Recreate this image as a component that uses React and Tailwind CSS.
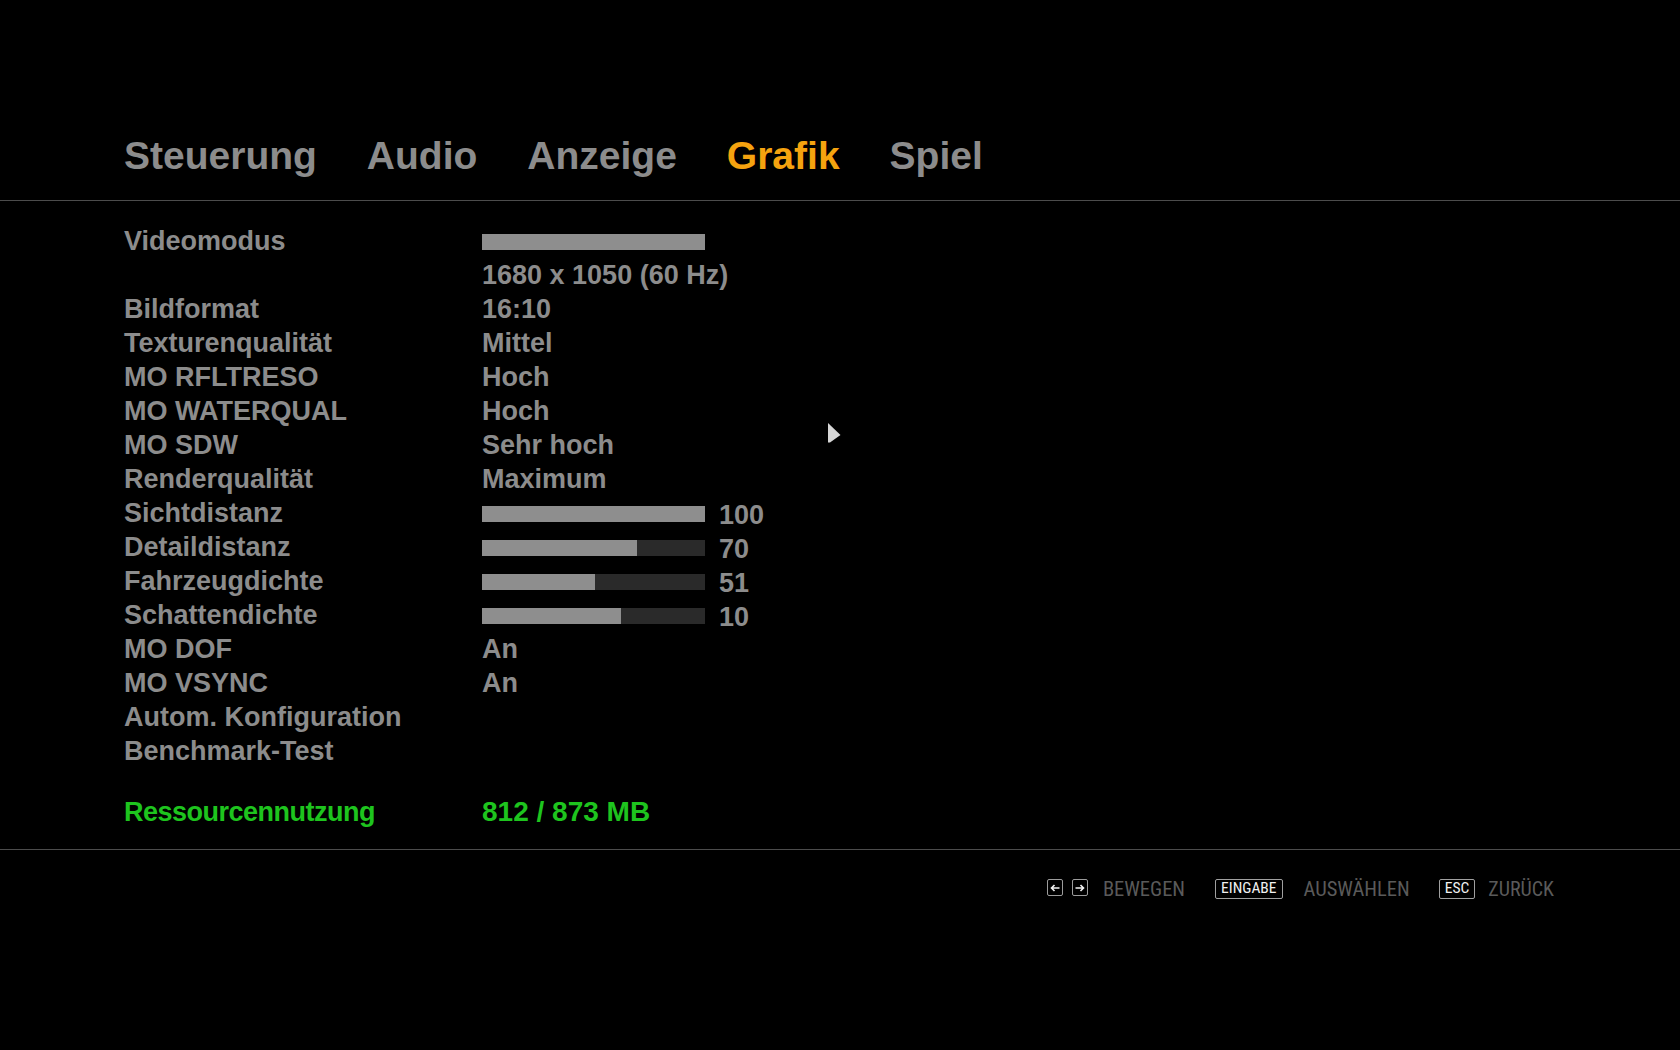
import React from 'react';

const tabs = [
  { name: 'Steuerung' },
  { name: 'Audio' },
  { name: 'Anzeige' },
  { name: 'Grafik', active: true },
  { name: 'Spiel' },
];

const rows = [
  { label: 'Videomodus', bar: 100 },
  { label: '', value: '1680 x 1050 (60 Hz)' },
  { label: 'Bildformat', value: '16:10' },
  { label: 'Texturenqualität', value: 'Mittel' },
  { label: 'MO RFLTRESO', value: 'Hoch' },
  { label: 'MO WATERQUAL', value: 'Hoch' },
  { label: 'MO SDW', value: 'Sehr hoch' },
  { label: 'Renderqualität', value: 'Maximum' },
  { label: 'Sichtdistanz', bar: 100, num: '100' },
  { label: 'Detaildistanz', bar: 69.4, num: '70' },
  { label: 'Fahrzeugdichte', bar: 50.7, num: '51' },
  { label: 'Schattendichte', bar: 62.3, num: '10' },
  { label: 'MO DOF', value: 'An' },
  { label: 'MO VSYNC', value: 'An' },
  { label: 'Autom. Konfiguration' },
  { label: 'Benchmark-Test' },
];

function Bar({ fill }) {
  return (
    <div className="mt-[10px] h-4 w-[223px] bg-[#2a2a2a]">
      <div className="h-full bg-[#8e8e8e]" style={{ width: `${fill}%` }} />
    </div>
  );
}

function Row({ row }) {
  return (
    <div className="flex h-[34px] items-start text-[27px] leading-[34px]">
      <div className="w-[358px] shrink-0 whitespace-nowrap">{row.label}</div>
      {row.bar !== undefined && <Bar fill={row.bar} />}
      {row.num && <div className="ml-[14px] mt-[2px]">{row.num}</div>}
      {row.value && <div className="whitespace-nowrap">{row.value}</div>}
    </div>
  );
}

function ArrowKey({ dir }) {
  return (
    <div className="flex h-[17px] w-[16px] items-center justify-center rounded-[2px] border border-[#9c9c9c]">
      <svg width="10" height="8" viewBox="0 0 10 8" fill="none" stroke="#f2f2f2" strokeWidth="1.6">
        {dir === 'left' ? (
          <path d="M9.5 4H1.5M4.5 1L1.5 4l3 3" />
        ) : (
          <path d="M0.5 4H8.5M5.5 1l3 3-3 3" />
        )}
      </svg>
    </div>
  );
}

function KeyCap({ children }) {
  return (
    <div className="flex h-[20px] items-center rounded-[2px] border border-[#a0a0a0] px-[5px] text-[15.5px] leading-none text-[#f0f0f0]">
      {children}
    </div>
  );
}

export default function App() {
  return (
    <div className="relative h-[1050px] w-full overflow-hidden bg-black font-['Liberation_Sans',Arial,sans-serif] font-bold text-[#8c8c8c]">
      {/* tab strip */}
      <div className="flex gap-[50px] border-b border-[#4c4c4c] pb-[21px] pl-[124px] pt-[132px] text-[39px] leading-[47px]">
        {tabs.map((t) => (
          <div key={t.name} className={t.active ? 'text-[#f5a30f]' : 'text-[#8c8c8c]'}>
            {t.name}
          </div>
        ))}
      </div>

      {/* settings list */}
      <div className="border-b border-[#4c4c4c] pb-[20px] pl-[124px] pt-[23px]">
        {rows.map((r, i) => (
          <Row key={i} row={r} />
        ))}
        <div className="mt-[27px] flex h-[34px] items-baseline leading-[34px] text-[#1ec41e]">
          <div className="w-[358px] shrink-0 text-[27px] tracking-[-0.5px]">Ressourcennutzung</div>
          <div className="text-[28px]">812 / 873 MB</div>
        </div>
      </div>

      {/* key legend */}
      <div className="mt-[29px] flex items-start justify-end pr-[126px] font-['Roboto_Condensed',Roboto,sans-serif] font-normal">
        <ArrowKey dir="left" />
        <div className="ml-[9px]">
          <ArrowKey dir="right" />
        </div>
        <div className="ml-[15px] text-[20.5px] leading-[20px] text-[#5a5a5a]">BEWEGEN</div>
        <div className="ml-[30px]">
          <KeyCap>EINGABE</KeyCap>
        </div>
        <div className="ml-[21px] text-[20.5px] leading-[20px] text-[#5a5a5a]">AUSWÄHLEN</div>
        <div className="ml-[29px]">
          <KeyCap>ESC</KeyCap>
        </div>
        <div className="ml-[13px] text-[20px] leading-[20px] text-[#5a5a5a]">ZURÜCK</div>
      </div>

      {/* mouse pointer */}
      <svg className="absolute left-[828px] top-[423px]" width="14" height="20" viewBox="0 0 14 20">
        <polygon points="0,0 12.5,12 2,19.5 0,19.5" fill="#d6d6d6" />
      </svg>
    </div>
  );
}
